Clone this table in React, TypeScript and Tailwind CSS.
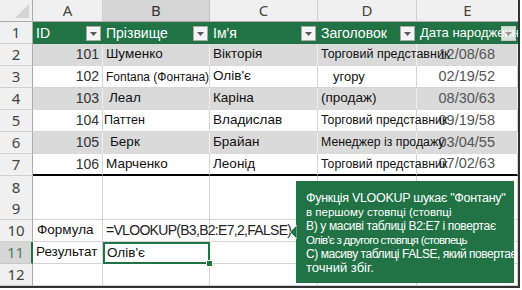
import React from "react";

const GRID = "grid grid-cols-[33px_70px_107px_108px_99px_101px]";

const Dropdown = ({ faded }: { faded?: boolean }) => (
  <span
    className={`absolute right-[2px] top-[4px] w-[15px] h-[15px] border flex items-center justify-center ${
      faded ? "bg-white/80 border-[#c9c9c9]" : "bg-[#f4f4f4] border-[#a9a9a9]"
    }`}
  >
    <svg width="9" height="6" viewBox="0 0 9 6">
      <path d="M1 1 L8 1 L4.5 5 Z" fill={faded ? "#9a9a9a" : "#595959"} />
    </svg>
  </span>
);

const RowHead = ({ n, active, className = "" }: { n: number; active?: boolean; className?: string }) => (
  <div
    className={`flex items-center justify-center border-b border-r text-[15px] font-['Noto_Sans',sans-serif] ${
      active
        ? "bg-[#d6d6d6] text-[#4d7a5c] border-b-[#c8c8c8] border-r-2 border-r-[#217346]"
        : "bg-[#f0f0f0] text-[#444] border-b-[#d0d0d0] border-r-[#ababab]"
    } ${className}`}
  >
    {n}
  </div>
);

type Row = {
  n: number;
  id: string;
  last: string;
  first: string;
  title: string;
  date: string;
  lastCls?: string;
  titleCls?: string;
};

const rows: Row[] = [
  { n: 2, id: "101", last: "Шуменко", first: "Вікторія", title: "Торговий представник", date: "12/08/68", titleCls: "text-[12.5px]" },
  { n: 3, id: "102", last: "Fontana (Фонтана)", first: "Олів'є", title: "угору", date: "02/19/52", lastCls: "text-[12px]", titleCls: "pl-[12px] text-[13px]" },
  { n: 4, id: "103", last: "Леал", first: "Каріна", title: "(продаж)", date: "08/30/63", lastCls: "pl-[3px]" },
  { n: 5, id: "104", last: "Паттен", first: "Владислав", title: "Торговий представник", date: "09/19/58", lastCls: "ml-[-2px] text-[12.5px]", titleCls: "text-[12.3px]" },
  { n: 6, id: "105", last: "Берк", first: "Брайан", title: "Менеджер із продажу", date: "03/04/55", lastCls: "pl-[4px]", titleCls: "text-[12.3px]" },
  { n: 7, id: "106", last: "Марченко", first: "Леонід", title: "Торговий представник", date: "07/02/63", titleCls: "text-[12.3px]" },
];

const DataRow = ({ r }: { r: Row }) => {
  const band = r.n % 2 === 0;
  const cell = band
    ? "bg-[#dadada] border-r border-b border-r-[#efefef] border-b-[#dadada]"
    : "bg-white border-r border-b border-r-[#d4d4d4] border-b-[#d4d4d4]";
  const last = r.n === 7 ? "border-b-2 border-b-black" : "";
  return (
    <>
      <RowHead n={r.n} />
      <div className={`${cell} ${last} flex items-center justify-end pr-[3px] text-[14px] text-[#333]`}>{r.id}</div>
      <div className={`${cell} ${last} flex items-center pl-[3px] text-[13.5px] text-[#111]`}>
        <span className={`relative z-10 whitespace-nowrap ${r.lastCls ?? ""}`}>{r.last}</span>
      </div>
      <div className={`${cell} ${last} flex items-center pl-[3px] text-[13.5px] text-[#111]`}>{r.first}</div>
      <div className={`${cell} ${last} flex items-center pl-[3px] text-[13.5px] text-[#111]`}>
        <span className={`relative z-10 whitespace-nowrap ${r.titleCls ?? ""}`}>{r.title}</span>
      </div>
      <div className={`${cell} ${last} flex items-center justify-end pr-[22px] text-[14.5px] text-[#555]`}>{r.date}</div>
    </>
  );
};

const Blank = ({ className = "" }: { className?: string }) => (
  <div className={`bg-white border-r border-b border-[#d4d4d4] ${className}`} />
);

export default function App() {
  return (
    <div className="w-[522px] h-[290px] bg-white overflow-hidden font-['Liberation_Sans',sans-serif]">
      <div className="relative w-[520px] border-r-2 border-b-2 border-[#333]">
        <div className={`${GRID} auto-rows-[22px]`}>
          {/* column headers */}
          <div className="relative bg-[#f0f0f0] border-r border-b border-[#ababab]">
            <svg className="absolute right-[3px] bottom-[3px]" width="14" height="14" viewBox="0 0 14 14">
              <path d="M14 0 L14 14 L0 14 Z" fill="#d4d4d4" />
            </svg>
          </div>
          <div className="bg-[#f0f0f0] border-r border-r-[#d0d0d0] border-b border-b-[#ababab] flex items-center justify-center text-[15px] text-[#444] font-['Noto_Sans',sans-serif]">A</div>
          <div className="bg-[#d6d6d6] border-r border-r-[#c0c0c0] border-b border-b-[#ababab] flex items-center justify-center text-[15px] text-[#333] font-['Noto_Sans',sans-serif]">B</div>
          <div className="bg-[#f0f0f0] border-r border-r-[#d0d0d0] border-b border-b-[#ababab] flex items-center justify-center text-[15px] text-[#444] font-['Noto_Sans',sans-serif]">C</div>
          <div className="bg-[#f0f0f0] border-r border-r-[#d0d0d0] border-b border-b-[#ababab] flex items-center justify-center text-[15px] text-[#444] font-['Noto_Sans',sans-serif]">D</div>
          <div className="bg-[#f0f0f0] border-b border-b-[#ababab] flex items-center justify-center text-[15px] text-[#444] font-['Noto_Sans',sans-serif]">E</div>

          {/* table header row */}
          <RowHead n={1} />
          {["ID", "Прізвище", "Ім'я", "Заголовок"].map((h) => (
            <div key={h} className="relative bg-[#217346] flex items-center pl-[3px] text-[14px] text-white">
              {h}
              <Dropdown />
            </div>
          ))}
          <div className="relative bg-[#217346] flex items-center pl-[3px] text-[13px] text-white overflow-hidden whitespace-nowrap">
            Дата народження
            <Dropdown faded />
          </div>

          {rows.map((r) => (
            <DataRow key={r.n} r={r} />
          ))}

          {/* rows 8 - 12 */}
          <RowHead n={8} className="h-[23px]" />
          <Blank className="h-[23px]" />
          <Blank className="h-[23px]" />
          <Blank className="h-[23px]" />
          <Blank className="h-[23px]" />
          <Blank className="h-[23px]" />

          <RowHead n={9} />
          <Blank />
          <Blank />
          <Blank />
          <Blank />
          <Blank />

          <RowHead n={10} />
          <div className="bg-white border-r border-b border-[#d4d4d4] flex items-center pl-[4px] text-[13.5px] text-[#111]">Формула</div>
          <div className="bg-white border-r border-b border-[#d4d4d4] flex items-center pl-[3px] text-[14px] tracking-[-0.7px] text-[#222]">
            <span className="relative z-10 whitespace-nowrap">=VLOOKUP(B3,B2:E7,2,FALSE)</span>
          </div>
          <Blank />
          <Blank />
          <Blank />

          <RowHead n={11} active />
          <div className="bg-white border-r border-b border-[#d4d4d4] flex items-center pl-[3px] text-[13.5px] text-[#111]">Результат</div>
          <div className="relative bg-white border-2 border-[#217346] flex items-center pl-[2px] text-[13.5px] text-[#111]">
            Олів'є
            <span className="absolute right-[-5px] bottom-[-5px] w-[7px] h-[7px] bg-[#217346] border border-white" />
          </div>
          <Blank />
          <Blank />
          <Blank />

          <RowHead n={12} />
          <Blank />
          <Blank />
          <Blank />
          <Blank />
          <Blank />
        </div>

        {/* callout */}
        <div className="absolute left-[296px] top-[181px] w-[218px] h-[102px] z-20 bg-[#217346] text-white pl-[10px] pt-[10px] leading-[14px] whitespace-nowrap overflow-hidden">
          <div className="text-[12.5px] tracking-[-0.3px]">Функція VLOOKUP шукає "Фонтану"</div>
          <div className="text-[11.5px]">в першому стовпці (стовпці</div>
          <div className="text-[12px] tracking-[-0.35px]">B) у масиві таблиці B2:E7 і повертає</div>
          <div className="text-[11.5px] tracking-[-0.7px]">Олів'є з другого стовпця (стовпець</div>
          <div className="text-[12px] tracking-[-0.45px]">C) масиву таблиці FALSE, який повертає</div>
          <div className="text-[13px]">точний збіг.</div>
        </div>
        <svg className="absolute left-[289px] top-[225px] z-20" width="8" height="14" viewBox="0 0 8 14">
          <path d="M8 0 L1 7 L8 14 Z" fill="#217346" stroke="#cfe3d6" strokeWidth="0.8" />
        </svg>
      </div>
    </div>
  );
}
